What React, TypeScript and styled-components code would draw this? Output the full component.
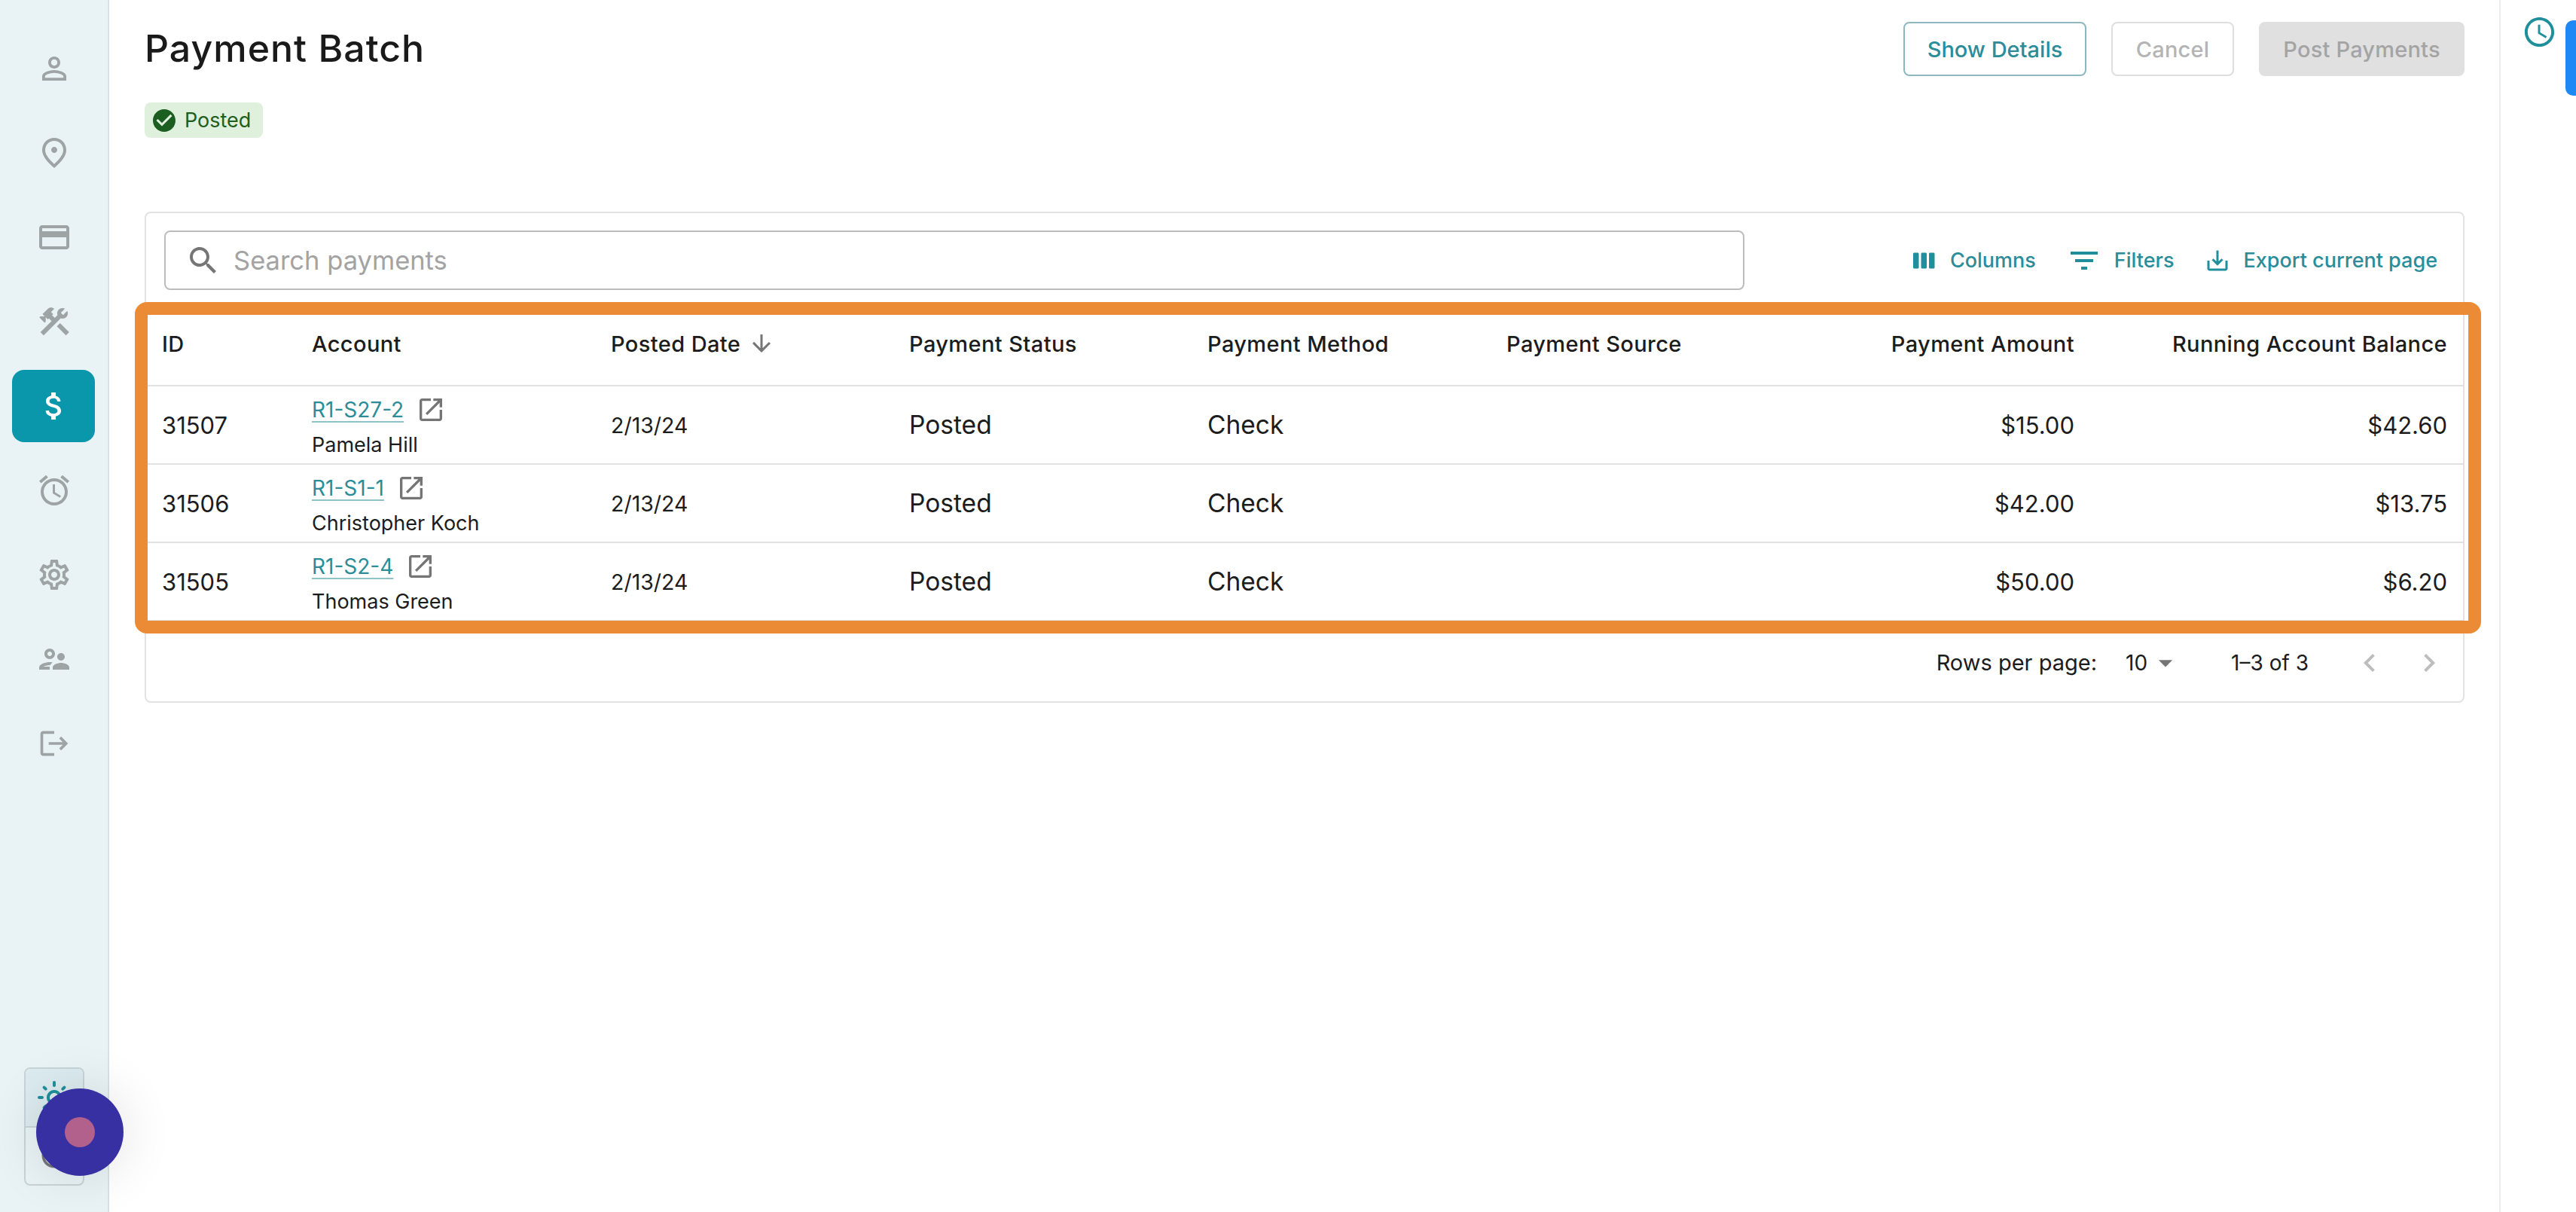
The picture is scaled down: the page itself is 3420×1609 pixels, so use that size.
import React from 'react';
import styled, { createGlobalStyle } from 'styled-components';

const GlobalStyle = createGlobalStyle`
  html, body {
    margin: 0;
    padding: 0;
    background: #fff;
  }
  * {
    box-sizing: border-box;
  }
`;

const paths = {
  person: 'M12 5.9c1.16 0 2.1.94 2.1 2.1s-.94 2.1-2.1 2.1S9.9 9.16 9.9 8s.94-2.1 2.1-2.1m0 9c2.97 0 6.1 1.46 6.1 2.1v1.1H5.9V17c0-.64 3.13-2.1 6.1-2.1M12 4C9.79 4 8 5.79 8 8s1.79 4 4 4 4-1.79 4-4-1.79-4-4-4zm0 9c-2.67 0-8 1.34-8 4v3h16v-3c0-2.66-5.33-4-8-4z',
  place: 'M12 12c-1.1 0-2-.9-2-2s.9-2 2-2 2 .9 2 2-.9 2-2 2zm6-1.8C18 6.57 15.35 4 12 4s-6 2.57-6 6.2c0 2.34 1.95 5.44 6 9.14 4.05-3.7 6-6.8 6-9.14zM12 2c4.2 0 8 3.22 8 8.2 0 3.32-2.67 7.25-8 11.8-5.33-4.55-8-8.48-8-11.8C4 5.22 7.8 2 12 2z',
  card: 'M20 4H4c-1.11 0-1.99.89-1.99 2L2 18c0 1.11.89 2 2 2h16c1.11 0 2-.89 2-2V6c0-1.11-.89-2-2-2zm0 14H4v-6h16v6zm0-10H4V6h16v2z',
  tools: 'm13.7826 15.1719 2.1213-2.1213 5.9963 5.9962-2.1213 2.1213zM17.5 10c1.93 0 3.5-1.57 3.5-3.5 0-.58-.16-1.12-.41-1.6l-2.7 2.7-1.49-1.49 2.7-2.7c-.48-.25-1.02-.41-1.6-.41C15.57 3 14 4.57 14 6.5c0 .41.08.8.21 1.16l-1.85 1.85-1.78-1.78.71-.71-1.41-1.41L12 3.49c-1.17-1.17-3.07-1.17-4.24 0L4.22 7.03l1.41 1.41H2.81l-.71.71 3.54 3.54.71-.71V9.15l1.41 1.41.71-.71 1.78 1.78-7.41 7.41 2.12 2.12L16.34 9.79c.36.13.75.21 1.16.21z',
  money: 'M11.8 10.9c-2.27-.59-3-1.2-3-2.15 0-1.09 1.01-1.85 2.7-1.85 1.78 0 2.44.85 2.5 2.1h2.21c-.07-1.72-1.12-3.3-3.21-3.81V3h-3v2.16c-1.94.42-3.5 1.68-3.5 3.61 0 2.31 1.91 3.46 4.7 4.13 2.5.6 3 1.48 3 2.41 0 .69-.49 1.79-2.7 1.79-2.06 0-2.87-.92-2.98-2.1h-2.2c.12 2.19 1.76 3.42 3.68 3.83V21h3v-2.15c1.95-.37 3.5-1.5 3.5-3.55 0-2.84-2.43-3.81-4.7-4.4z',
  alarm: 'M22 5.72l-4.6-3.86-1.29 1.53 4.6 3.86L22 5.72zM7.88 3.39L6.6 1.86 2 5.71l1.29 1.53 4.59-3.85zM12.5 8H11v6l4.75 2.85.75-1.23-4-2.37V8zM12 4c-4.97 0-9 4.03-9 9s4.02 9 9 9c4.97 0 9-4.03 9-9s-4.03-9-9-9zm0 16c-3.87 0-7-3.13-7-7s3.13-7 7-7 7 3.13 7 7-3.13 7-7 7z',
  gear: 'M19.43 12.98c.04-.32.07-.64.07-.98 0-.34-.03-.66-.07-.98l2.11-1.65c.19-.15.24-.42.12-.64l-2-3.46c-.09-.16-.26-.25-.44-.25-.06 0-.12.01-.17.03l-2.49 1c-.52-.4-1.08-.73-1.69-.98l-.38-2.65C14.46 2.18 14.25 2 14 2h-4c-.25 0-.46.18-.49.42l-.38 2.65c-.61.25-1.17.59-1.69.98l-2.49-1c-.06-.02-.12-.03-.18-.03-.17 0-.34.09-.43.25l-2 3.46c-.13.22-.07.49.12.64l2.11 1.65c-.04.32-.07.65-.07.98 0 .33.03.66.07.98l-2.11 1.65c-.19.15-.24.42-.12.64l2 3.46c.09.16.26.25.44.25.06 0 .12-.01.17-.03l2.49-1c.52.4 1.08.73 1.69.98l.38 2.65c.03.24.24.42.49.42h4c.25 0 .46-.18.49-.42l.38-2.65c.61-.25 1.17-.59 1.69-.98l2.49 1c.06.02.12.03.18.03.17 0 .34-.09.43-.25l2-3.46c.12-.22.07-.49-.12-.64l-2.11-1.65zm-1.98-1.71c.04.31.05.52.05.73 0 .21-.02.43-.05.73l-.14 1.13.89.7 1.08.84-.7 1.21-1.27-.51-1.04-.42-.9.68c-.43.32-.84.56-1.25.73l-1.06.43-.16 1.13-.2 1.35h-1.4l-.19-1.35-.16-1.13-1.06-.43c-.43-.18-.83-.41-1.23-.71l-.91-.7-1.06.43-1.27.51-.7-1.21 1.08-.84.89-.7-.14-1.13c-.03-.31-.05-.54-.05-.74s.02-.43.05-.73l.14-1.13-.89-.7-1.08-.84.7-1.21 1.27.51 1.04.42.9-.68c.43-.32.84-.56 1.25-.73l1.06-.43.16-1.13.2-1.35h1.39l.19 1.35.16 1.13 1.06.43c.43.18.83.41 1.23.71l.91.7 1.06-.43 1.27-.51.7 1.21-1.07.85-.89.7.14 1.13zM12 8c-2.21 0-4 1.79-4 4s1.79 4 4 4 4-1.79 4-4-1.79-4-4-4zm0 6c-1.1 0-2-.9-2-2s.9-2 2-2 2 .9 2 2-.9 2-2 2z',
  users: 'M9 12c1.93 0 3.5-1.57 3.5-3.5S10.93 5 9 5 5.5 6.57 5.5 8.5 7.07 12 9 12zm0-5c.83 0 1.5.67 1.5 1.5S9.83 10 9 10s-1.5-.67-1.5-1.5S8.17 7 9 7zm.05 10H4.77c.99-.5 2.7-1 4.23-1 .11 0 .23.01.34.01.34-.73.93-1.33 1.64-1.81-.73-.13-1.42-.2-1.98-.2-2.34 0-7 1.17-7 3.5V19h7v-1.5c0-.17.02-.34.05-.5zm7.45-2.5c-1.84 0-5.5 1.01-5.5 3V19h11v-1.5c0-1.99-3.66-3-5.5-3zm1.21-1.82c.76-.43 1.29-1.24 1.29-2.18C19 9.12 17.88 8 16.5 8S14 9.12 14 10.5c0 .94.53 1.75 1.29 2.18.36.2.77.32 1.21.32s.85-.12 1.21-.32z',
  logout: 'm17 7-1.41 1.41L18.17 11H8v2h10.17l-2.58 2.58L17 17l5-5zM4 5h8V3H4c-1.1 0-2 .9-2 2v14c0 1.1.9 2 2 2h8v-2H4V5z',
  sun: 'M12 9c1.65 0 3 1.35 3 3s-1.35 3-3 3-3-1.35-3-3 1.35-3 3-3m0-2c-2.76 0-5 2.24-5 5s2.24 5 5 5 5-2.24 5-5-2.24-5-5-5zM2 13h2c.55 0 1-.45 1-1s-.45-1-1-1H2c-.55 0-1 .45-1 1s.45 1 1 1zm18 0h2c.55 0 1-.45 1-1s-.45-1-1-1h-2c-.55 0-1 .45-1 1s.45 1 1 1zM11 2v2c0 .55.45 1 1 1s1-.45 1-1V2c0-.55-.45-1-1-1s-1 .45-1 1zm0 18v2c0 .55.45 1 1 1s1-.45 1-1v-2c0-.55-.45-1-1-1s-1 .45-1 1zM5.99 4.58c-.39-.39-1.03-.39-1.41 0-.39.39-.39 1.03 0 1.41l1.06 1.06c.39.39 1.03.39 1.41 0s.39-1.03 0-1.41L5.99 4.58zm12.37 12.37c-.39-.39-1.03-.39-1.41 0-.39.39-.39 1.03 0 1.41l1.06 1.06c.39.39 1.03.39 1.41 0 .39-.39.39-1.03 0-1.41l-1.06-1.06zm1.06-10.96c.39-.39.39-1.03 0-1.41-.39-.39-1.03-.39-1.41 0l-1.06 1.06c-.39.39-.39 1.03 0 1.41s1.03.39 1.41 0l1.06-1.06zM7.05 18.36c.39-.39.39-1.03 0-1.41-.39-.39-1.03-.39-1.41 0l-1.06 1.06c-.39.39-.39 1.03 0 1.41s1.03.39 1.41 0l1.06-1.06z',
  moon: 'M9.37 5.51c-.18.64-.27 1.31-.27 1.99 0 4.08 3.32 7.4 7.4 7.4.68 0 1.35-.09 1.99-.27C17.45 17.19 14.93 19 12 19c-3.86 0-7-3.14-7-7 0-2.93 1.81-5.45 4.37-6.49zM12 3c-4.97 0-9 4.03-9 9s4.03 9 9 9 9-4.03 9-9c0-.46-.04-.92-.1-1.36-.98 1.37-2.58 2.26-4.4 2.26-2.98 0-5.4-2.42-5.4-5.4 0-1.81.89-3.42 2.26-4.4-.44-.06-.9-.1-1.36-.1z',
  check: 'M12 2C6.48 2 2 6.48 2 12s4.48 10 10 10 10-4.48 10-10S17.52 2 12 2zm-2 15-5-5 1.41-1.41L10 14.17l7.59-7.59L19 8l-9 9z',
  search: 'M15.5 14h-.79l-.28-.27C15.41 12.59 16 11.11 16 9.5 16 5.91 13.09 3 9.5 3S3 5.91 3 9.5 5.91 16 9.5 16c1.61 0 3.09-.59 4.23-1.57l.27.28v.79l5 4.99L20.49 19l-4.99-5zm-6 0C7.01 14 5 11.99 5 9.5S7.01 5 9.5 5 14 7.01 14 9.5 11.99 14 9.5 14z',
  columns: 'M6 5H3c-.55 0-1 .45-1 1v12c0 .55.45 1 1 1h3c.55 0 1-.45 1-1V6c0-.55-.45-1-1-1zm14 0h-3c-.55 0-1 .45-1 1v12c0 .55.45 1 1 1h3c.55 0 1-.45 1-1V6c0-.55-.45-1-1-1zm-7 0h-3c-.55 0-1 .45-1 1v12c0 .55.45 1 1 1h3c.55 0 1-.45 1-1V6c0-.55-.45-1-1-1z',
  filter: 'M10 18h4v-2h-4v2zM3 6v2h18V6H3zm3 7h12v-2H6v2z',
  exportFile: 'M19 12v7H5v-7H3v7c0 1.1.9 2 2 2h14c1.1 0 2-.9 2-2v-7h-2zm-6 .67l2.59-2.58L17 11.5l-5 5-5-5 1.41-1.41L11 12.67V3h2z',
  arrowDown: 'M20 12l-1.41-1.41L13 16.17V4h-2v12.17l-5.58-5.59L4 12l8 8 8-8z',
  openNew: 'M19 19H5V5h7V3H5c-1.11 0-2 .9-2 2v14c0 1.1.89 2 2 2h14c1.1 0 2-.9 2-2v-7h-2v7zM14 3v2h3.59l-9.83 9.83 1.41 1.41L19 6.41V10h2V3h-7z',
  dropdown: 'M7 10l5 5 5-5z',
  chevronLeft: 'M15.41 16.59 10.83 12l4.58-4.59L14 6l-6 6 6 6 1.41-1.41z',
  chevronRight: 'M8.59 16.59 13.17 12 8.59 7.41 10 6l6 6-6 6-1.41-1.41z',
  clock: 'M11.99 2C6.47 2 2 6.48 2 12s4.47 10 9.99 10C17.52 22 22 17.52 22 12S17.52 2 11.99 2zM12 20c-4.42 0-8-3.58-8-8s3.58-8 8-8 8 3.58 8 8-3.58 8-8 8zm.5-13H11v6l5.25 3.15.75-1.23-4.5-2.67z',
};

const Svg = styled.svg<{ $size: number; $color: string }>`
  display: block;
  flex: none;
  width: ${(p) => p.$size}px;
  height: ${(p) => p.$size}px;
  fill: ${(p) => p.$color};
`;

const Icon = ({ name, size, color }: { name: keyof typeof paths; size: number; color: string }) => (
  <Svg viewBox="0 0 24 24" $size={size} $color={color}>
    <path d={paths[name]} />
  </Svg>
);

const Page = styled.div`
  position: relative;
  display: flex;
  width: 3420px;
  height: 1609px;
  overflow: hidden;
  background: #fff;
  font-family: Inter, "Liberation Sans", sans-serif;
  color: #1c1c1c;
`;

const Sidebar = styled.nav`
  flex: none;
  display: flex;
  flex-direction: column;
  width: 145px;
  padding: 43px 17px 35px 16px;
  background: #e9f3f6;
  border-right: 2px solid #d9e1e4;
`;

const NavList = styled.div`
  display: flex;
  flex-direction: column;
  gap: 16px;
`;

const NavItem = styled.div<{ $active?: boolean }>`
  display: flex;
  align-items: center;
  justify-content: center;
  width: 110px;
  height: 96px;
  padding-left: 2px;
  border-radius: 16px;
  background: ${(p) => (p.$active ? '#0a96ab' : 'transparent')};
`;

const ThemeToggle = styled.div`
  display: flex;
  flex-direction: column;
  width: 80px;
  height: 157px;
  margin: auto 0 0 16px;
  border: 2px solid #c6d4d8;
  border-radius: 8px;
  overflow: hidden;
`;

const ThemeOption = styled.div<{ $selected?: boolean }>`
  flex: 1;
  display: flex;
  align-items: center;
  justify-content: center;
  background: ${(p) => (p.$selected ? '#dcebef' : 'transparent')};
  & + & {
    border-top: 2px solid #c6d4d8;
  }
`;

const Main = styled.main`
  flex: 1;
  min-width: 0;
  padding: 29px 46px 0 47px;
`;

const TopBar = styled.header`
  display: flex;
  align-items: center;
  justify-content: space-between;
  height: 72px;
`;

const Title = styled.h1`
  margin: 0 0 3px;
  font-size: 50px;
  font-weight: 500;
  letter-spacing: 1px;
  color: #1a1a1a;
`;

const Actions = styled.div`
  display: flex;
  gap: 33px;
`;

const Button = styled.button<{ $variant: 'outline' | 'muted' | 'filled' }>`
  height: 72px;
  border-radius: 8px;
  font-family: inherit;
  font-size: 29px;
  font-weight: 500;
  padding: 0;
  width: ${(p) => (p.$variant === 'outline' ? '243px' : p.$variant === 'muted' ? '163px' : '273px')};
  letter-spacing: ${(p) => (p.$variant === 'outline' ? '0' : '0.2px')};
  color: ${(p) => (p.$variant === 'outline' ? '#2a8d99' : p.$variant === 'muted' ? '#b4b4b4' : '#a4a4a4')};
  background: ${(p) => (p.$variant === 'filled' ? '#e0e0e0' : '#fff')};
  border: ${(p) =>
    p.$variant === 'outline' ? '2px solid #8fb7bf' : p.$variant === 'muted' ? '2px solid #dedede' : 'none'};
`;

const StatusChip = styled.div`
  display: inline-flex;
  align-items: center;
  gap: 9px;
  height: 47px;
  margin-top: 35px;
  padding: 0 16px 0 8px;
  border-radius: 8px;
  background: #dff0dd;
  color: #1e5e20;
  font-size: 27px;
`;

const Card = styled.section`
  position: relative;
  margin-top: 98px;
  height: 652px;
  border: 2px solid #e2e2e2;
  border-radius: 8px;
  background: #fff;
`;

const Toolbar = styled.div`
  display: flex;
  align-items: flex-start;
  justify-content: space-between;
  height: 118px;
  padding: 23px 34px 0 24px;
`;

const SearchField = styled.div`
  display: flex;
  align-items: center;
  gap: 16px;
  width: 2098px;
  height: 79px;
  padding-left: 26px;
  border: 2px solid #bdbdbd;
  border-radius: 8px;
  color: #a3a3a3;
  font-size: 34.5px;
`;

const ToolGroup = styled.div`
  display: flex;
  align-items: center;
  gap: 40px;
  height: 79px;
`;

const Tool = styled.div`
  display: flex;
  align-items: center;
  gap: 16px;
  color: #2a8d99;
  font-size: 27px;
  font-weight: 500;
`;

const Row = styled.div<{ $head?: boolean }>`
  display: grid;
  grid-template-columns: 199px 396px 396px 396px 397px 397px 400px 495px;
  height: ${(p) => (p.$head ? '112px' : '104px')};
  border-bottom: 2px solid #e2e2e2;
  &:last-child {
    border-bottom: none;
  }
`;

const Cell = styled.div<{ $head?: boolean; $right?: boolean; $size?: number }>`
  display: flex;
  align-items: center;
  justify-content: ${(p) => (p.$right ? 'flex-end' : 'flex-start')};
  gap: 10px;
  padding: 0 21px 0 22px;
  font-size: ${(p) => (p.$head ? 29 : p.$size ?? 31)}px;
  font-weight: ${(p) => (p.$head ? 500 : 400)};
  letter-spacing: ${(p) => (p.$head ? '0.4px' : '0')};
  color: #1c1c1c;
  white-space: nowrap;
  &:first-child,
  &:nth-child(2) {
    padding-left: 21px;
  }
`;

const AccountCell = styled.div`
  display: flex;
  flex-direction: column;
  justify-content: center;
  gap: 9px;
  padding: 5px 22px 0 21px;
`;

const AccountLine = styled.div`
  display: flex;
  align-items: center;
  gap: 16px;
  height: 40px;
`;

const AccountLink = styled.a`
  color: #2a8d99;
  font-size: 28px;
  text-decoration: underline;
  text-decoration-thickness: 2px;
  text-underline-offset: 5px;
  text-decoration-color: #8fc1c8;
`;

const AccountName = styled.div`
  font-size: 27px;
  line-height: 36px;
  color: #1c1c1c;
`;

const Pagination = styled.footer`
  display: flex;
  align-items: center;
  justify-content: flex-end;
  height: 106px;
  padding: 3px 21px 0 0;
  font-size: 29px;
  color: #1c1c1c;
`;

const RowsSelect = styled.div`
  display: flex;
  align-items: center;
  gap: 2px;
  margin: 0 65px 0 38px;
  font-size: 28px;
`;

const PageRange = styled.span`
  font-size: 28px;
`;

const PageArrows = styled.div`
  display: flex;
  gap: 31px;
  margin-left: 57px;
`;

const Highlight = styled.div`
  position: absolute;
  left: -15px;
  right: -24px;
  top: 118px;
  height: 440px;
  border: 17px solid #ec8b35;
  border-radius: 16px;
  pointer-events: none;
`;

const History = styled.aside`
  position: relative;
  flex: none;
  width: 102px;
  padding: 19px 0 0 28px;
  border-left: 2px solid #ececec;
`;

const BlueTab = styled.div`
  position: absolute;
  top: 27px;
  right: 0;
  width: 14px;
  height: 100px;
  border-radius: 10px 0 0 10px;
  background: #1e88f5;
`;

const RecorderButton = styled.div`
  position: absolute;
  left: 48px;
  top: 1445px;
  display: flex;
  align-items: center;
  justify-content: center;
  width: 116px;
  height: 116px;
  border-radius: 50%;
  background: #3730a3;
  box-shadow: 0 0 70px rgba(0, 0, 0, 0.12);
`;

const RecorderDot = styled.div`
  width: 40px;
  height: 40px;
  border-radius: 50%;
  background: #b2608c;
`;

const navIcons: { name: keyof typeof paths; size: number; active?: boolean }[] = [
  { name: 'person', size: 48 },
  { name: 'place', size: 48 },
  { name: 'card', size: 48 },
  { name: 'tools', size: 48 },
  { name: 'money', size: 48, active: true },
  { name: 'alarm', size: 48 },
  { name: 'gear', size: 48 },
  { name: 'users', size: 48 },
  { name: 'logout', size: 44 },
];

const payments = [
  { id: '31507', account: 'R1-S27-2', name: 'Pamela Hill', amount: '$15.00', balance: '$42.60' },
  { id: '31506', account: 'R1-S1-1', name: 'Christopher Koch', amount: '$42.00', balance: '$13.75' },
  { id: '31505', account: 'R1-S2-4', name: 'Thomas Green', amount: '$50.00', balance: '$6.20' },
];

const App: React.FC = () => {
  return (
    <Page>
      <GlobalStyle />
      <Sidebar>
        <NavList>
          {navIcons.map((item) => (
            <NavItem key={item.name} $active={item.active}>
              <Icon name={item.name} size={item.size} color={item.active ? '#fff' : '#9ea3a6'} />
            </NavItem>
          ))}
        </NavList>
        <ThemeToggle>
          <ThemeOption $selected>
            <Icon name="sun" size={48} color="#1f8f9c" />
          </ThemeOption>
          <ThemeOption>
            <Icon name="moon" size={44} color="#757575" />
          </ThemeOption>
        </ThemeToggle>
      </Sidebar>

      <Main>
        <TopBar>
          <Title>Payment Batch</Title>
          <Actions>
            <Button $variant="outline">Show Details</Button>
            <Button $variant="muted">Cancel</Button>
            <Button $variant="filled">Post Payments</Button>
          </Actions>
        </TopBar>

        <StatusChip>
          <Icon name="check" size={36} color="#1b5e20" />
          Posted
        </StatusChip>

        <Card>
          <Toolbar>
            <SearchField>
              <Icon name="search" size={48} color="#757575" />
              Search payments
            </SearchField>
            <ToolGroup>
              <Tool>
                <Icon name="columns" size={36} color="#1f8f9c" />
                Columns
              </Tool>
              <Tool>
                <Icon name="filter" size={48} color="#1f8f9c" />
                Filters
              </Tool>
              <Tool>
                <Icon name="exportFile" size={36} color="#1f8f9c" />
                Export current page
              </Tool>
            </ToolGroup>
          </Toolbar>

          <Row $head>
            <Cell $head>ID</Cell>
            <Cell $head>Account</Cell>
            <Cell $head>
              Posted Date
              <Icon name="arrowDown" size={36} color="#757575" />
            </Cell>
            <Cell $head>Payment Status</Cell>
            <Cell $head>Payment Method</Cell>
            <Cell $head>Payment Source</Cell>
            <Cell $head $right>Payment Amount</Cell>
            <Cell $head $right>Running Account Balance</Cell>
          </Row>

          {payments.map((p) => (
            <Row key={p.id}>
              <Cell>{p.id}</Cell>
              <AccountCell>
                <AccountLine>
                  <AccountLink>{p.account}</AccountLink>
                  <Icon name="openNew" size={40} color="#757575" />
                </AccountLine>
                <AccountName>{p.name}</AccountName>
              </AccountCell>
              <Cell $size={28.5}>2/13/24</Cell>
              <Cell $size={33.5}>Posted</Cell>
              <Cell $size={33.5}>Check</Cell>
              <Cell />
              <Cell $right>{p.amount}</Cell>
              <Cell $right>{p.balance}</Cell>
            </Row>
          ))}

          <Pagination>
            Rows per page:
            <RowsSelect>
              10
              <Icon name="dropdown" size={44} color="#757575" />
            </RowsSelect>
            <PageRange>1–3 of 3</PageRange>
            <PageArrows>
              <Icon name="chevronLeft" size={48} color="#bdbdbd" />
              <Icon name="chevronRight" size={48} color="#bdbdbd" />
            </PageArrows>
          </Pagination>

          <Highlight />
        </Card>
      </Main>

      <History>
        <Icon name="clock" size={47} color="#1f8f9c" />
        <BlueTab />
      </History>

      <RecorderButton>
        <RecorderDot />
      </RecorderButton>
    </Page>
  );
};

export default App;
